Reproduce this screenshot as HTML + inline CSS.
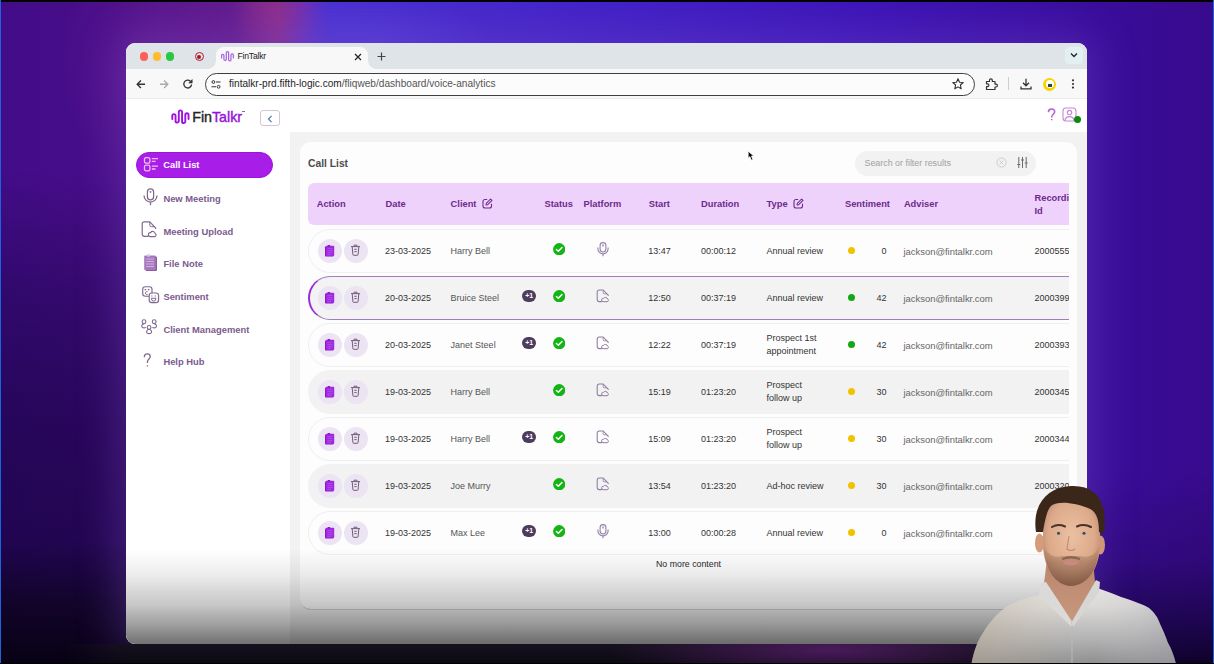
<!DOCTYPE html>
<html><head><meta charset="utf-8">
<style>
*{box-sizing:border-box;margin:0;padding:0}
html,body{width:1214px;height:664px;overflow:hidden}
body{position:relative;font-family:"Liberation Sans",sans-serif;background:#3c0a88}
.abs{position:absolute}
#bg{position:absolute;left:0;top:0;width:1214px;height:664px;
 background:
  radial-gradient(ellipse 40px 40px at 275px 12px, rgba(150,50,140,.45), rgba(150,50,140,0) 100%),
  radial-gradient(ellipse 120px 40px at 370px 38px, rgba(90,70,220,.4), rgba(90,70,220,0) 100%),
  radial-gradient(ellipse 90px 120px at 150px 60px, rgba(120,40,150,.35), rgba(120,40,150,0) 100%),
  linear-gradient(90deg,#420c88 0px,#4a0e8a 120px,#621c8e 230px,#862c8e 278px,#6a30b8 305px,#4a30d0 330px,#4222c6 600px,#3d14b6 880px,#3a0ea0 1060px,#380a8c 1214px);
}
#shadeL{position:absolute;left:0;top:0;width:160px;height:664px;
 background:linear-gradient(180deg,rgba(10,0,45,0) 0px,rgba(10,0,45,0) 170px,rgba(10,0,45,.3) 290px,rgba(10,0,45,.5) 420px,rgba(10,0,45,.6) 540px,rgba(6,2,20,.8) 600px,rgba(4,1,14,.95) 664px);}
#shadeR{position:absolute;left:1060px;top:0;width:154px;height:664px;
 background:linear-gradient(180deg,rgba(8,0,25,0) 0px,rgba(8,0,25,0) 470px,rgba(8,0,25,.18) 560px,rgba(5,0,20,.5) 620px,rgba(5,0,20,.7) 650px,rgba(3,0,12,.8) 664px);}
#win{position:absolute;left:126px;top:43px;width:961px;height:601px;border-radius:9px;overflow:hidden;background:#fff;box-shadow:0 0 40px 10px rgba(125,80,200,.33)}
#tabbar{position:absolute;left:0;top:0;width:961px;height:26px;background:#dfe4e8}
#toolbar{position:absolute;left:0;top:26px;width:961px;height:30px;background:#f8f8f8;border-bottom:1px solid #ececec}
#page{position:absolute;left:0;top:56px;width:961px;height:545px;background:#fff}
#overlay{position:absolute;left:126px;top:43px;width:961px;height:601px;border-radius:9px;
 background:linear-gradient(180deg,rgba(0,0,0,0) 0px,rgba(0,0,0,0) 506px,rgba(0,0,0,.07) 531px,rgba(0,0,0,.15) 547px,rgba(0,0,0,.22) 562px,rgba(0,0,0,.3) 572px,rgba(0,0,0,.36) 580px,rgba(0,0,0,.52) 597px,rgba(0,0,0,.55) 601px);}
#bottom{position:absolute;left:60px;top:644px;width:1080px;height:20px;background:radial-gradient(ellipse 220px 30px at 770px 6px,rgba(90,30,110,.75),rgba(90,30,110,0)),linear-gradient(180deg,#16111e,#0b0912);-webkit-mask-image:linear-gradient(90deg,transparent 0px,#000 70px,#000 1040px,transparent 1080px)}
.t{position:absolute;white-space:nowrap}
</style></head>
<body>
<div id="bg"></div>
<div id="shadeL"></div>
<div id="shadeR"></div>
<div class="abs" style="left:0;top:0;width:1214px;height:2px;background:#000"></div>
<div class="abs" style="left:0;top:0;width:1px;height:664px;background:#1a64e0"></div>
<div class="abs" style="left:1213px;top:0;width:1px;height:664px;background:#1a64e0"></div>

<div id="win">
 <div id="tabbar"></div>
 <div id="toolbar"></div>
 <div id="page"></div>
 <div id="A" style="position:absolute;left:-126px;top:-43px;width:1214px;height:664px">
  <!-- traffic lights -->
  <div class="abs" style="left:139.6px;top:52.4px;width:8.5px;height:8.5px;border-radius:50%;background:#fe5f57"></div>
  <div class="abs" style="left:152.6px;top:52.4px;width:8.5px;height:8.5px;border-radius:50%;background:#febc2e"></div>
  <div class="abs" style="left:165.7px;top:52.4px;width:8.5px;height:8.5px;border-radius:50%;background:#28c840"></div>
  <!-- record -->
  <div class="abs" style="left:194.5px;top:51.8px;width:9.5px;height:9.5px;border-radius:50%;border:1.3px solid #b01830"></div>
  <div class="abs" style="left:197.3px;top:54.6px;width:4px;height:4px;border-radius:50%;background:#b01020"></div>
  <!-- tab -->
  <div class="abs" style="left:216px;top:47px;width:152px;height:22px;background:#f8f8f8;border-radius:8px 8px 0 0"></div>
  <div class="abs" style="left:208px;top:61px;width:8px;height:8px;background:radial-gradient(circle at 0 0,#dfe4e8 7.5px,#f8f8f8 8px)"></div>
  <div class="abs" style="left:368px;top:61px;width:8px;height:8px;background:radial-gradient(circle at 100% 0,#dfe4e8 7.5px,#f8f8f8 8px)"></div>
  <svg class="abs" style="left:220.5px;top:50px" width="13" height="13" viewBox="3.5 3 18 16"><path d="M4.3 13 V9.7 A1.62 1.62 0 0 1 7.55 9.7 V14.9 A1.62 1.62 0 0 0 10.8 14.9 V6 A1.62 1.62 0 0 1 14.05 6 V15.4 A1.62 1.62 0 0 0 17.3 15.4 V8.9 A1.62 1.62 0 0 1 20.55 8.9 V13" fill="none" stroke="#a564e0" stroke-width="1.7" stroke-linecap="round"/></svg>
  <div class="t" style="left:237.5px;top:51px;font-size:8.6px;letter-spacing:-0.2px;color:#222">FinTalkr</div>
  <svg class="abs" style="left:353.5px;top:52.5px" width="8" height="8" viewBox="0 0 8 8"><path d="M1 1L7 7M7 1L1 7" stroke="#222" stroke-width="1.2"/></svg>
  <svg class="abs" style="left:376.5px;top:51.5px" width="9" height="9" viewBox="0 0 9 9"><path d="M4.5 0.5V8.5M0.5 4.5H8.5" stroke="#444" stroke-width="1.2"/></svg>
  <div class="abs" style="left:1065px;top:47px;width:18px;height:17px;border-radius:4px;background:#e3f0f1"></div>
  <svg class="abs" style="left:1070px;top:52px" width="8" height="6" viewBox="0 0 8 6"><path d="M1 1.5L4 4.5L7 1.5" fill="none" stroke="#222" stroke-width="1.3"/></svg>
  <!-- toolbar -->
  <svg class="abs" style="left:0;top:0" width="300" height="120"><g fill="none" stroke-width="1.35"><path d="M145 84.2H137.3M140.9 80.5L137.2 84.2L140.9 87.9" stroke="#333"/><path d="M160 84.2H167.7M164.1 80.5L167.8 84.2L164.1 87.9" stroke="#aaa"/><path d="M191.6 84.5A3.9 3.9 0 1 1 190.4 81.2" stroke="#333"/></g><path d="M192.2 79.6V83H188.8Z" fill="#333" stroke="#333" stroke-width="0.6"/></svg>
  <div class="abs" style="left:204.5px;top:72.5px;width:770px;height:23px;border-radius:12px;border:1.6px solid #3f3f3f;background:#fcfcfc"></div>
  <svg class="abs" style="left:211px;top:79.5px" width="10" height="9" viewBox="0 0 10 9"><circle cx="2.4" cy="2" r="1.4" fill="none" stroke="#333" stroke-width="1"/><path d="M5 2H9.5M0.5 6.8H5" stroke="#333" stroke-width="1.1"/><circle cx="7.6" cy="6.8" r="1.4" fill="none" stroke="#333" stroke-width="1"/></svg>
  <div class="t" style="left:229px;top:78px;font-size:10.1px;color:#1f1f1f">fintalkr-prd.fifth-logic.com<span style="color:#555">/fliqweb/dashboard/voice-analytics</span></div>
  <svg class="abs" style="left:952px;top:78px" width="12" height="12" viewBox="0 0 12 12"><path d="M6 0.8L7.5 4.2L11.2 4.5L8.4 7L9.2 10.8L6 8.9L2.8 10.8L3.6 7L0.8 4.5L4.5 4.2Z" fill="none" stroke="#333" stroke-width="1.1" stroke-linejoin="round"/></svg>
  <svg class="abs" style="left:985px;top:77.5px" width="13" height="13" viewBox="0 0 13 13"><path d="M1.5 3.5H4.5V2.2A1.4 1.4 0 0 1 7.3 2.2V3.5H10V6.2H11A1.4 1.4 0 0 1 11 9H10V11.5H1.5V8.6H2.5A1.4 1.4 0 0 0 2.5 5.8H1.5Z" fill="none" stroke="#333" stroke-width="1.2" stroke-linejoin="round"/></svg>
  <div class="abs" style="left:1008px;top:77px;width:1px;height:13px;background:#c8d0d0"></div>
  <svg class="abs" style="left:1020px;top:77.5px" width="12" height="12" viewBox="0 0 12 12"><path d="M6 0.8V7.5M3 4.8L6 7.8L9 4.8M1 8.5V10.8H11V8.5" fill="none" stroke="#333" stroke-width="1.3"/></svg>
  <div class="abs" style="left:1043px;top:77.5px;width:13px;height:13px;border-radius:50%;background:#f5d400"></div>
  <div class="abs" style="left:1045.5px;top:80px;width:8px;height:8px;border-radius:50%;background:#fff"></div>
  <div class="abs" style="left:1047.5px;top:84px;width:4px;height:3px;background:#2a4a40"></div>
  <svg class="abs" style="left:1070px;top:77px" width="6" height="14" viewBox="0 0 6 14"><circle cx="3" cy="3.3" r="1.1" fill="#333"/><circle cx="3" cy="7" r="1.1" fill="#333"/><circle cx="3" cy="10.6" r="1.1" fill="#333"/></svg>
  <!--PAGE-->
<svg class="abs" style="left:168px;top:106px" width="24" height="20" viewBox="0 0 24 20"><path d="M4.3 13 V9.7 A1.62 1.62 0 0 1 7.55 9.7 V14.9 A1.62 1.62 0 0 0 10.8 14.9 V6 A1.62 1.62 0 0 1 14.05 6 V15.4 A1.62 1.62 0 0 0 17.3 15.4 V8.9 A1.62 1.62 0 0 1 20.55 8.9 V13" fill="none" stroke="#a012e0" stroke-width="1.9" stroke-linecap="round"/></svg>
<div class="t" style="left:192.3px;top:108.9px;font-size:14.3px;font-weight:400;letter-spacing:-0.05px;-webkit-text-stroke:0.4px #262626;color:#262626">Fin<span style="color:#9612d8;-webkit-text-stroke:0.4px #9612d8">Talkr</span></div>
<div class="abs" style="left:241.5px;top:111px;width:3px;height:1px;background:#777"></div>
<div class="abs" style="left:260px;top:109.5px;width:20px;height:16.5px;border:1px solid #d8c2d8;border-radius:3px;background:#fff"></div>
<svg class="abs" style="left:267px;top:114.5px" width="6" height="8" viewBox="0 0 6 8"><path d="M4.5 0.8L1.5 4L4.5 7.2" fill="none" stroke="#4a78a8" stroke-width="1.2"/></svg>
<svg class="abs" style="left:0;top:0" width="1214" height="200"><path d="M1048.4 112.2C1048.4 109.8 1050 108.9 1051.5 108.9C1053.2 108.9 1054.7 110 1054.7 111.8C1054.7 114 1051.7 114.6 1051.7 117.2V117.4M1051.7 119V120.3" fill="none" stroke="#b262d2" stroke-width="1.5"/></svg>
<svg class="abs" style="left:1062px;top:107px" width="15" height="15" viewBox="0 0 15 15"><rect x="1" y="1" width="13" height="13" rx="3" fill="none" stroke="#c488dc" stroke-width="1.1"/><circle cx="7.5" cy="5.6" r="2.2" fill="none" stroke="#c488dc" stroke-width="1.1"/><path d="M2.8 13.6C3.5 10.5 5.5 9.6 7.5 9.6S11.5 10.5 12.2 13.6" fill="none" stroke="#c488dc" stroke-width="1.1"/></svg>
<div class="abs" style="left:1073.5px;top:115.5px;width:7.5px;height:7.5px;border-radius:50%;background:#0c8a0c"></div>
<div class="abs" style="left:290px;top:132px;width:797px;height:512px;background:#f2f2f2"></div>
<div class="abs" style="left:136px;top:152.3px;width:137px;height:25.5px;border-radius:13px;background:#a81ee8;border:1px solid #9a14da"></div>
<svg class="abs" style="left:143px;top:156px" width="17" height="16" viewBox="0 0 17 16"><rect x="1.5" y="1.6" width="5.4" height="5.6" rx="1.6" fill="none" stroke="#f0bdf2" stroke-width="1.3"/><rect x="1.5" y="9.2" width="5.4" height="5.6" rx="1.6" fill="none" stroke="#f0bdf2" stroke-width="1.3"/><path d="M8.8 2.6H15M8.8 5.4H12.6M8.8 10.2H15M8.8 13H12.6" stroke="#f0bdf2" stroke-width="1.3"/></svg>
<div class="t" style="left:163.3px;top:159.8px;font-size:9.3px;font-weight:700;color:#fff">Call List</div>
<div class="t" style="left:163.4px;top:193.0px;font-size:9.4px;font-weight:700;color:#7b5b8e">New Meeting</div>
<div class="t" style="left:163.4px;top:225.5px;font-size:9.4px;font-weight:700;color:#7b5b8e">Meeting Upload</div>
<div class="t" style="left:163.4px;top:258.0px;font-size:9.4px;font-weight:700;color:#7b5b8e">File Note</div>
<div class="t" style="left:163.4px;top:291.0px;font-size:9.4px;font-weight:700;color:#7b5b8e">Sentiment</div>
<div class="t" style="left:163.4px;top:323.5px;font-size:9.4px;font-weight:700;color:#7b5b8e">Client Management</div>
<div class="t" style="left:163.4px;top:356.0px;font-size:9.4px;font-weight:700;color:#7b5b8e">Help Hub</div>
<svg class="abs" style="left:143px;top:187.5px" width="15" height="18" viewBox="0 0 15 18"><rect x="4.4" y="0.9" width="6.2" height="11" rx="3.1" fill="none" stroke="#7f6a8e" stroke-width="1.25"/><path d="M6.8 3.6L7.5 5L8.2 3.6Z" fill="#7f6a8e" stroke="#7f6a8e" stroke-width="0.6"/><path d="M1 7.5A6.5 6.5 0 0 0 14 7.5M7.5 14.2V17.2" fill="none" stroke="#7f6a8e" stroke-width="1.25"/></svg>
<svg class="abs" style="left:141px;top:221px" width="17" height="17" viewBox="0 0 17 17"><path d="M7.6 15.4H3.4A2.2 2.2 0 0 1 1.2 13.2V3A2.2 2.2 0 0 1 3.4 0.8H8.8L14.6 6.8V8" fill="none" stroke="#7f6a8e" stroke-width="1.2" stroke-linejoin="round"/><path d="M8.8 1.2V4.2A1.5 1.5 0 0 0 10.3 5.7H13.8" fill="none" stroke="#7f6a8e" stroke-width="1"/><path d="M9.2 15.6H13.8A1.6 1.6 0 0 0 14.2 12.6A2.5 2.5 0 0 0 9.6 11.6A2 2 0 0 0 9.2 15.6Z" fill="none" stroke="#7f6a8e" stroke-width="1.15"/></svg>
<svg class="abs" style="left:143px;top:253.5px" width="15" height="18" viewBox="0 0 15 18"><rect x="2.5" y="2.5" width="11.5" height="14.5" rx="1" fill="#8a5ea0"/><rect x="1.2" y="1.5" width="11.5" height="14.5" rx="1" fill="#a878be"/><path d="M3 5H11M3 7.5H11M3 10H11M3 12.5H11" stroke="#d8bfe5" stroke-width="0.8"/><rect x="4" y="0.3" width="3" height="2.5" rx="1" fill="#d8c8e0"/></svg>
<svg class="abs" style="left:0;top:0" width="300" height="400"><g fill="none" stroke="#7f6a8e" stroke-width="1.15"><rect x="142.7" y="286.7" width="9.3" height="9.5" rx="2.6"/><path d="M144.6 289.6H146.2M147.9 289.6H149.5" stroke-width="1.1"/><path d="M147.6 291.8A1.5 1.5 0 1 0 147.6 294.4" stroke-width="1"/><rect x="149.2" y="293" width="9.4" height="9.6" rx="2.6" fill="#fdfdfd"/><path d="M151.9 295.4V296.6M155.3 295.4V296.6" stroke-width="1"/><path d="M151.3 298.3H156Q155.8 301.2 153.65 301.2Q151.5 301.2 151.3 298.3Z" stroke-width="1"/></g></svg>
<svg class="abs" style="left:0;top:0" width="300" height="400"><g fill="none" stroke="#7f6a8e" stroke-width="1.1"><circle cx="144" cy="321.7" r="1.9"/><path d="M144 323.6C141.8 324.2 141.2 326.2 142.3 327.3C143 328 145 328 145.8 327.3"/><circle cx="154.2" cy="321.7" r="1.9"/><path d="M154.2 323.6C156.4 324.2 157 326.2 155.9 327.3C155.2 328 153.2 328 152.4 327.3"/><circle cx="149.1" cy="327.4" r="1.9"/><path d="M149.1 329.3C146.6 329.8 146 332.2 147.2 333.1C148 333.8 150.2 333.8 151 333.1C152.2 332.2 151.6 329.8 149.1 329.3"/></g><path d="M144.3 357.3C144.3 354.9 145.8 353.9 147.3 353.9C148.9 353.9 150.2 355 150.2 356.7C150.2 358.8 147.4 359.2 147.4 361.9V362.9M147.4 365.2V366.6" fill="none" stroke="#7f6a8e" stroke-width="1.3"/></svg>
<div class="abs" style="left:300px;top:142px;width:777px;height:468px;background:#fdfdfd;border-radius:11px;border-bottom:1px solid #d2d2d2"></div>
<div class="t" style="left:308px;top:158.4px;font-size:10.3px;font-weight:700;color:#4c4c4c">Call List</div>
<div class="abs" style="left:854.5px;top:150.5px;width:181px;height:25px;border-radius:13px;background:#f2f2f2"></div>
<div class="t" style="left:864.5px;top:157.5px;font-size:8.9px;color:#a0a0a0">Search or filter results</div>
<svg class="abs" style="left:995.5px;top:156.5px" width="11" height="11" viewBox="0 0 11 11"><circle cx="5.5" cy="5.5" r="4.6" fill="none" stroke="#c8c8c8" stroke-width="0.9"/><path d="M3.6 3.6L7.4 7.4M7.4 3.6L3.6 7.4" stroke="#c8c8c8" stroke-width="0.9"/></svg>
<svg class="abs" style="left:1016.5px;top:155.5px" width="11" height="13" viewBox="0 0 11 13"><path d="M1.8 1V12M5.5 1V12M9.2 1V12" stroke="#6a6a6a" stroke-width="1"/><path d="M0.3 8.5H3.3M4 4H7M7.7 7H10.7" stroke="#6a6a6a" stroke-width="1.2"/></svg>
<div class="abs" style="left:308px;top:183px;width:761px;height:380px;overflow:hidden">
<div class="abs" style="left:0;top:0.4px;width:800px;height:41.8px;background:#efd2fb;border-radius:6px"></div>
<div class="t" style="left:8.699999999999989px;top:16px;font-size:9.3px;font-weight:700;color:#6b2a8c;">Action</div>
<div class="t" style="left:77.60000000000002px;top:16px;font-size:9.3px;font-weight:700;color:#6b2a8c;">Date</div>
<div class="t" style="left:142.60000000000002px;top:16px;font-size:9.3px;font-weight:700;color:#6b2a8c;">Client</div>
<div class="t" style="left:236.5px;top:16px;font-size:9.3px;font-weight:700;color:#6b2a8c;">Status</div>
<div class="t" style="left:275.5px;top:16px;font-size:9.3px;font-weight:700;color:#6b2a8c;">Platform</div>
<div class="t" style="left:340.70000000000005px;top:16px;font-size:9.3px;font-weight:700;color:#6b2a8c;">Start</div>
<div class="t" style="left:393px;top:16px;font-size:9.3px;font-weight:700;color:#6b2a8c;">Duration</div>
<div class="t" style="left:458.6px;top:16px;font-size:9.3px;font-weight:700;color:#6b2a8c;">Type</div>
<div class="t" style="left:537px;top:16px;font-size:9.3px;font-weight:700;color:#6b2a8c;">Sentiment</div>
<div class="t" style="left:595.9px;top:16px;font-size:9.3px;font-weight:700;color:#6b2a8c;">Adviser</div>
<div class="t" style="left:726.5px;top:9.400000000000006px;font-size:9.3px;font-weight:700;color:#6b2a8c;line-height:12.4px">Recording<br>Id</div>
<svg class="abs" style="left:173.5px;top:15px" width="11" height="11" viewBox="0 0 11 11"><path d="M9.5 5.8V8A2 2 0 0 1 7.5 10H3A2 2 0 0 1 1 8V3.5A2 2 0 0 1 3 1.5H5.2" fill="none" stroke="#6a2a8a" stroke-width="1.1"/><path d="M4 7L4.3 5.3L8.6 1L10 2.4L5.7 6.7Z" fill="none" stroke="#6a2a8a" stroke-width="1.05" stroke-linejoin="round"/></svg>
<svg class="abs" style="left:484.5px;top:15px" width="11" height="11" viewBox="0 0 11 11"><path d="M9.5 5.8V8A2 2 0 0 1 7.5 10H3A2 2 0 0 1 1 8V3.5A2 2 0 0 1 3 1.5H5.2" fill="none" stroke="#6a2a8a" stroke-width="1.1"/><path d="M4 7L4.3 5.3L8.6 1L10 2.4L5.7 6.7Z" fill="none" stroke="#6a2a8a" stroke-width="1.05" stroke-linejoin="round"/></svg>
<div class="abs" style="left:0;top:45.80000000000001px;width:800px;height:44px;background:#fdfdfd;border:1px solid #efefef;border-radius:22px 0 0 22px"></div>
<div class="abs" style="left:9.600000000000023px;top:55.80000000000001px;width:24px;height:24px;border-radius:50%;background:#ece3f3"></div>
<div class="abs" style="left:35.69999999999999px;top:55.80000000000001px;width:24px;height:24px;border-radius:50%;background:#ece3f3"></div>
<svg class="abs" style="left:16.30000000000001px;top:61.80000000000001px" width="11" height="12" viewBox="0 0 11 12"><rect x="1" y="1.4" width="8.6" height="10" rx="0.9" fill="#8a14c8"/><rect x="1.8" y="0.8" width="8.4" height="10.2" rx="0.9" fill="#a028e0"/><path d="M3.4 3.6H8.6M3.4 5.6H8.6M3.4 7.6H8.6M3.4 9.3H7" stroke="#b658ea" stroke-width="0.7"/><rect x="3.6" y="0" width="2.6" height="1.4" rx="0.6" fill="#8a14c8"/></svg>
<svg class="abs" style="left:42px;top:60.900000000000006px" width="11" height="12" viewBox="0 0 11 12"><path d="M1 2.6H10M4 2.4V1.2H7V2.4M2.2 2.8L2.9 10.6A0.8 0.8 0 0 0 3.7 11.3H7.3A0.8 0.8 0 0 0 8.1 10.6L8.8 2.8M4.3 5.3H6.7M4.3 7.6H6.7" fill="none" stroke="#6e607a" stroke-width="1"/></svg>
<div class="t" style="left:77px;top:62.80000000000001px;font-size:9px;font-weight:400;color:#333;">23-03-2025</div>
<div class="t" style="left:142.60000000000002px;top:62.80000000000001px;font-size:9px;font-weight:400;color:#555;">Harry Bell</div>
<svg class="abs" style="left:244.89999999999998px;top:59.80000000000001px" width="12.4" height="12.4" viewBox="0 0 13 13"><circle cx="6.5" cy="6.5" r="6.4" fill="#14b414"/><path d="M3.6 6.8L5.6 8.7L9.4 4.7" fill="none" stroke="#fff" stroke-width="1.6" stroke-linecap="round" stroke-linejoin="round"/></svg>
<svg class="abs" style="left:288.5px;top:58.80000000000001px" width="12" height="15" viewBox="0 0 12 15"><rect x="3.1" y="0.6" width="5.8" height="9.4" rx="2.9" fill="none" stroke="#9580a8" stroke-width="1.1"/><path d="M5.4 2.8L6 4.6L6.6 2.8Z" fill="#9580a8" stroke="#9580a8" stroke-width="0.5"/><path d="M0.9 5.4V6.8A5.1 5.1 0 0 0 11.1 6.8V5.4M6 11.9V14.2" fill="none" stroke="#9580a8" stroke-width="1.1"/></svg>
<div class="t" style="left:321.5px;top:62.80000000000001px;width:60px;text-align:center;font-size:9px;color:#333">13:47</div>
<div class="t" style="left:393px;top:62.80000000000001px;font-size:9px;font-weight:400;color:#333;">00:00:12</div>
<div class="t" style="left:458.5px;top:62.80000000000001px;font-size:9px;font-weight:400;color:#333;">Annual review</div>
<div class="abs" style="left:539.5px;top:64.30000000000001px;width:7px;height:7px;border-radius:50%;background:#f2c100"></div>
<div class="t" style="left:538.6px;top:62.80000000000001px;width:40px;text-align:right;font-size:9px;color:#333">0</div>
<div class="t" style="left:595.4px;top:62.80000000000001px;font-size:9.45px;font-weight:400;color:#666;">jackson@fintalkr.com</div>
<div class="t" style="left:726.5px;top:62.80000000000001px;font-size:9px;font-weight:400;color:#333;">2000555</div>
<div class="abs" style="left:0;top:92.80000000000001px;width:800px;height:44px;background:#f3f3f3;border:1.5px solid #a57bc0;border-left:2.5px solid #9a2ad6;border-radius:22px 0 0 22px"></div>
<div class="abs" style="left:9.600000000000023px;top:102.80000000000001px;width:24px;height:24px;border-radius:50%;background:#ece3f3"></div>
<div class="abs" style="left:35.69999999999999px;top:102.80000000000001px;width:24px;height:24px;border-radius:50%;background:#ece3f3"></div>
<svg class="abs" style="left:16.30000000000001px;top:108.80000000000001px" width="11" height="12" viewBox="0 0 11 12"><rect x="1" y="1.4" width="8.6" height="10" rx="0.9" fill="#8a14c8"/><rect x="1.8" y="0.8" width="8.4" height="10.2" rx="0.9" fill="#a028e0"/><path d="M3.4 3.6H8.6M3.4 5.6H8.6M3.4 7.6H8.6M3.4 9.3H7" stroke="#b658ea" stroke-width="0.7"/><rect x="3.6" y="0" width="2.6" height="1.4" rx="0.6" fill="#8a14c8"/></svg>
<svg class="abs" style="left:42px;top:107.90000000000003px" width="11" height="12" viewBox="0 0 11 12"><path d="M1 2.6H10M4 2.4V1.2H7V2.4M2.2 2.8L2.9 10.6A0.8 0.8 0 0 0 3.7 11.3H7.3A0.8 0.8 0 0 0 8.1 10.6L8.8 2.8M4.3 5.3H6.7M4.3 7.6H6.7" fill="none" stroke="#6e607a" stroke-width="1"/></svg>
<div class="t" style="left:77px;top:109.80000000000001px;font-size:9px;font-weight:400;color:#333;">20-03-2025</div>
<div class="t" style="left:142.60000000000002px;top:109.80000000000001px;font-size:9px;font-weight:400;color:#555;">Bruice Steel</div>
<div class="abs" style="left:213.9000000000001px;top:106.69999999999999px;width:14.6px;height:12.6px;border-radius:6.3px;background:#4e3b5e;color:#fff;font-size:7px;font-weight:700;text-align:center;line-height:12.6px">+1</div>
<svg class="abs" style="left:244.89999999999998px;top:106.80000000000001px" width="12.4" height="12.4" viewBox="0 0 13 13"><circle cx="6.5" cy="6.5" r="6.4" fill="#14b414"/><path d="M3.6 6.8L5.6 8.7L9.4 4.7" fill="none" stroke="#fff" stroke-width="1.6" stroke-linecap="round" stroke-linejoin="round"/></svg>
<svg class="abs" style="left:288px;top:106.0px" width="14" height="14" viewBox="0 0 14 14"><path d="M5.8 12.6H3.2A2 2 0 0 1 1.2 10.6V3A2 2 0 0 1 3.2 1H7.2L12.2 6.2V7" fill="none" stroke="#8f7aa2" stroke-width="1.05" stroke-linejoin="round"/><path d="M7.2 1.3V3.6A1.2 1.2 0 0 0 8.4 4.8H11" fill="none" stroke="#8f7aa2" stroke-width="0.85"/><path d="M7 12.7H11.2A1.4 1.4 0 0 0 11.5 10A2.2 2.2 0 0 0 7.6 9.3A1.7 1.7 0 0 0 7 12.7Z" fill="none" stroke="#8f7aa2" stroke-width="1"/></svg>
<div class="t" style="left:321.5px;top:109.80000000000001px;width:60px;text-align:center;font-size:9px;color:#333">12:50</div>
<div class="t" style="left:393px;top:109.80000000000001px;font-size:9px;font-weight:400;color:#333;">00:37:19</div>
<div class="t" style="left:458.5px;top:109.80000000000001px;font-size:9px;font-weight:400;color:#333;">Annual review</div>
<div class="abs" style="left:539.5px;top:111.30000000000001px;width:7px;height:7px;border-radius:50%;background:#13a813"></div>
<div class="t" style="left:538.6px;top:109.80000000000001px;width:40px;text-align:right;font-size:9px;color:#333">42</div>
<div class="t" style="left:595.4px;top:109.80000000000001px;font-size:9.45px;font-weight:400;color:#666;">jackson@fintalkr.com</div>
<div class="t" style="left:726.5px;top:109.80000000000001px;font-size:9px;font-weight:400;color:#333;">2000399</div>
<div class="abs" style="left:0;top:139.8px;width:800px;height:44px;background:#fdfdfd;border:1px solid #efefef;border-radius:22px 0 0 22px"></div>
<div class="abs" style="left:9.600000000000023px;top:149.8px;width:24px;height:24px;border-radius:50%;background:#ece3f3"></div>
<div class="abs" style="left:35.69999999999999px;top:149.8px;width:24px;height:24px;border-radius:50%;background:#ece3f3"></div>
<svg class="abs" style="left:16.30000000000001px;top:155.8px" width="11" height="12" viewBox="0 0 11 12"><rect x="1" y="1.4" width="8.6" height="10" rx="0.9" fill="#8a14c8"/><rect x="1.8" y="0.8" width="8.4" height="10.2" rx="0.9" fill="#a028e0"/><path d="M3.4 3.6H8.6M3.4 5.6H8.6M3.4 7.6H8.6M3.4 9.3H7" stroke="#b658ea" stroke-width="0.7"/><rect x="3.6" y="0" width="2.6" height="1.4" rx="0.6" fill="#8a14c8"/></svg>
<svg class="abs" style="left:42px;top:154.90000000000003px" width="11" height="12" viewBox="0 0 11 12"><path d="M1 2.6H10M4 2.4V1.2H7V2.4M2.2 2.8L2.9 10.6A0.8 0.8 0 0 0 3.7 11.3H7.3A0.8 0.8 0 0 0 8.1 10.6L8.8 2.8M4.3 5.3H6.7M4.3 7.6H6.7" fill="none" stroke="#6e607a" stroke-width="1"/></svg>
<div class="t" style="left:77px;top:156.8px;font-size:9px;font-weight:400;color:#333;">20-03-2025</div>
<div class="t" style="left:142.60000000000002px;top:156.8px;font-size:9px;font-weight:400;color:#555;">Janet Steel</div>
<div class="abs" style="left:213.9000000000001px;top:153.7px;width:14.6px;height:12.6px;border-radius:6.3px;background:#4e3b5e;color:#fff;font-size:7px;font-weight:700;text-align:center;line-height:12.6px">+1</div>
<svg class="abs" style="left:244.89999999999998px;top:153.8px" width="12.4" height="12.4" viewBox="0 0 13 13"><circle cx="6.5" cy="6.5" r="6.4" fill="#14b414"/><path d="M3.6 6.8L5.6 8.7L9.4 4.7" fill="none" stroke="#fff" stroke-width="1.6" stroke-linecap="round" stroke-linejoin="round"/></svg>
<svg class="abs" style="left:288px;top:153.0px" width="14" height="14" viewBox="0 0 14 14"><path d="M5.8 12.6H3.2A2 2 0 0 1 1.2 10.6V3A2 2 0 0 1 3.2 1H7.2L12.2 6.2V7" fill="none" stroke="#8f7aa2" stroke-width="1.05" stroke-linejoin="round"/><path d="M7.2 1.3V3.6A1.2 1.2 0 0 0 8.4 4.8H11" fill="none" stroke="#8f7aa2" stroke-width="0.85"/><path d="M7 12.7H11.2A1.4 1.4 0 0 0 11.5 10A2.2 2.2 0 0 0 7.6 9.3A1.7 1.7 0 0 0 7 12.7Z" fill="none" stroke="#8f7aa2" stroke-width="1"/></svg>
<div class="t" style="left:321.5px;top:156.8px;width:60px;text-align:center;font-size:9px;color:#333">12:22</div>
<div class="t" style="left:393px;top:156.8px;font-size:9px;font-weight:400;color:#333;">00:37:19</div>
<div class="t" style="left:458.5px;top:149.3px;font-size:9px;font-weight:400;color:#333;line-height:12.8px">Prospect 1st<br>appointment</div>
<div class="abs" style="left:539.5px;top:158.3px;width:7px;height:7px;border-radius:50%;background:#13a813"></div>
<div class="t" style="left:538.6px;top:156.8px;width:40px;text-align:right;font-size:9px;color:#333">42</div>
<div class="t" style="left:595.4px;top:156.8px;font-size:9.45px;font-weight:400;color:#666;">jackson@fintalkr.com</div>
<div class="t" style="left:726.5px;top:156.8px;font-size:9px;font-weight:400;color:#333;">2000393</div>
<div class="abs" style="left:0;top:186.8px;width:800px;height:44px;background:#f2f2f2;border-radius:22px 0 0 22px"></div>
<div class="abs" style="left:9.600000000000023px;top:196.8px;width:24px;height:24px;border-radius:50%;background:#ece3f3"></div>
<div class="abs" style="left:35.69999999999999px;top:196.8px;width:24px;height:24px;border-radius:50%;background:#ece3f3"></div>
<svg class="abs" style="left:16.30000000000001px;top:202.8px" width="11" height="12" viewBox="0 0 11 12"><rect x="1" y="1.4" width="8.6" height="10" rx="0.9" fill="#8a14c8"/><rect x="1.8" y="0.8" width="8.4" height="10.2" rx="0.9" fill="#a028e0"/><path d="M3.4 3.6H8.6M3.4 5.6H8.6M3.4 7.6H8.6M3.4 9.3H7" stroke="#b658ea" stroke-width="0.7"/><rect x="3.6" y="0" width="2.6" height="1.4" rx="0.6" fill="#8a14c8"/></svg>
<svg class="abs" style="left:42px;top:201.90000000000003px" width="11" height="12" viewBox="0 0 11 12"><path d="M1 2.6H10M4 2.4V1.2H7V2.4M2.2 2.8L2.9 10.6A0.8 0.8 0 0 0 3.7 11.3H7.3A0.8 0.8 0 0 0 8.1 10.6L8.8 2.8M4.3 5.3H6.7M4.3 7.6H6.7" fill="none" stroke="#6e607a" stroke-width="1"/></svg>
<div class="t" style="left:77px;top:203.8px;font-size:9px;font-weight:400;color:#333;">19-03-2025</div>
<div class="t" style="left:142.60000000000002px;top:203.8px;font-size:9px;font-weight:400;color:#555;">Harry Bell</div>
<svg class="abs" style="left:244.89999999999998px;top:200.8px" width="12.4" height="12.4" viewBox="0 0 13 13"><circle cx="6.5" cy="6.5" r="6.4" fill="#14b414"/><path d="M3.6 6.8L5.6 8.7L9.4 4.7" fill="none" stroke="#fff" stroke-width="1.6" stroke-linecap="round" stroke-linejoin="round"/></svg>
<svg class="abs" style="left:288px;top:200.0px" width="14" height="14" viewBox="0 0 14 14"><path d="M5.8 12.6H3.2A2 2 0 0 1 1.2 10.6V3A2 2 0 0 1 3.2 1H7.2L12.2 6.2V7" fill="none" stroke="#8f7aa2" stroke-width="1.05" stroke-linejoin="round"/><path d="M7.2 1.3V3.6A1.2 1.2 0 0 0 8.4 4.8H11" fill="none" stroke="#8f7aa2" stroke-width="0.85"/><path d="M7 12.7H11.2A1.4 1.4 0 0 0 11.5 10A2.2 2.2 0 0 0 7.6 9.3A1.7 1.7 0 0 0 7 12.7Z" fill="none" stroke="#8f7aa2" stroke-width="1"/></svg>
<div class="t" style="left:321.5px;top:203.8px;width:60px;text-align:center;font-size:9px;color:#333">15:19</div>
<div class="t" style="left:393px;top:203.8px;font-size:9px;font-weight:400;color:#333;">01:23:20</div>
<div class="t" style="left:458.5px;top:196.3px;font-size:9px;font-weight:400;color:#333;line-height:12.8px">Prospect<br>follow up</div>
<div class="abs" style="left:539.5px;top:205.3px;width:7px;height:7px;border-radius:50%;background:#f2c100"></div>
<div class="t" style="left:538.6px;top:203.8px;width:40px;text-align:right;font-size:9px;color:#333">30</div>
<div class="t" style="left:595.4px;top:203.8px;font-size:9.45px;font-weight:400;color:#666;">jackson@fintalkr.com</div>
<div class="t" style="left:726.5px;top:203.8px;font-size:9px;font-weight:400;color:#333;">2000345</div>
<div class="abs" style="left:0;top:233.8px;width:800px;height:44px;background:#fdfdfd;border:1px solid #efefef;border-radius:22px 0 0 22px"></div>
<div class="abs" style="left:9.600000000000023px;top:243.8px;width:24px;height:24px;border-radius:50%;background:#ece3f3"></div>
<div class="abs" style="left:35.69999999999999px;top:243.8px;width:24px;height:24px;border-radius:50%;background:#ece3f3"></div>
<svg class="abs" style="left:16.30000000000001px;top:249.8px" width="11" height="12" viewBox="0 0 11 12"><rect x="1" y="1.4" width="8.6" height="10" rx="0.9" fill="#8a14c8"/><rect x="1.8" y="0.8" width="8.4" height="10.2" rx="0.9" fill="#a028e0"/><path d="M3.4 3.6H8.6M3.4 5.6H8.6M3.4 7.6H8.6M3.4 9.3H7" stroke="#b658ea" stroke-width="0.7"/><rect x="3.6" y="0" width="2.6" height="1.4" rx="0.6" fill="#8a14c8"/></svg>
<svg class="abs" style="left:42px;top:248.90000000000003px" width="11" height="12" viewBox="0 0 11 12"><path d="M1 2.6H10M4 2.4V1.2H7V2.4M2.2 2.8L2.9 10.6A0.8 0.8 0 0 0 3.7 11.3H7.3A0.8 0.8 0 0 0 8.1 10.6L8.8 2.8M4.3 5.3H6.7M4.3 7.6H6.7" fill="none" stroke="#6e607a" stroke-width="1"/></svg>
<div class="t" style="left:77px;top:250.8px;font-size:9px;font-weight:400;color:#333;">19-03-2025</div>
<div class="t" style="left:142.60000000000002px;top:250.8px;font-size:9px;font-weight:400;color:#555;">Harry Bell</div>
<div class="abs" style="left:213.9000000000001px;top:247.7px;width:14.6px;height:12.6px;border-radius:6.3px;background:#4e3b5e;color:#fff;font-size:7px;font-weight:700;text-align:center;line-height:12.6px">+1</div>
<svg class="abs" style="left:244.89999999999998px;top:247.8px" width="12.4" height="12.4" viewBox="0 0 13 13"><circle cx="6.5" cy="6.5" r="6.4" fill="#14b414"/><path d="M3.6 6.8L5.6 8.7L9.4 4.7" fill="none" stroke="#fff" stroke-width="1.6" stroke-linecap="round" stroke-linejoin="round"/></svg>
<svg class="abs" style="left:288px;top:247.0px" width="14" height="14" viewBox="0 0 14 14"><path d="M5.8 12.6H3.2A2 2 0 0 1 1.2 10.6V3A2 2 0 0 1 3.2 1H7.2L12.2 6.2V7" fill="none" stroke="#8f7aa2" stroke-width="1.05" stroke-linejoin="round"/><path d="M7.2 1.3V3.6A1.2 1.2 0 0 0 8.4 4.8H11" fill="none" stroke="#8f7aa2" stroke-width="0.85"/><path d="M7 12.7H11.2A1.4 1.4 0 0 0 11.5 10A2.2 2.2 0 0 0 7.6 9.3A1.7 1.7 0 0 0 7 12.7Z" fill="none" stroke="#8f7aa2" stroke-width="1"/></svg>
<div class="t" style="left:321.5px;top:250.8px;width:60px;text-align:center;font-size:9px;color:#333">15:09</div>
<div class="t" style="left:393px;top:250.8px;font-size:9px;font-weight:400;color:#333;">01:23:20</div>
<div class="t" style="left:458.5px;top:243.3px;font-size:9px;font-weight:400;color:#333;line-height:12.8px">Prospect<br>follow up</div>
<div class="abs" style="left:539.5px;top:252.3px;width:7px;height:7px;border-radius:50%;background:#f2c100"></div>
<div class="t" style="left:538.6px;top:250.8px;width:40px;text-align:right;font-size:9px;color:#333">30</div>
<div class="t" style="left:595.4px;top:250.8px;font-size:9.45px;font-weight:400;color:#666;">jackson@fintalkr.com</div>
<div class="t" style="left:726.5px;top:250.8px;font-size:9px;font-weight:400;color:#333;">2000344</div>
<div class="abs" style="left:0;top:280.8px;width:800px;height:44px;background:#f2f2f2;border-radius:22px 0 0 22px"></div>
<div class="abs" style="left:9.600000000000023px;top:290.8px;width:24px;height:24px;border-radius:50%;background:#ece3f3"></div>
<div class="abs" style="left:35.69999999999999px;top:290.8px;width:24px;height:24px;border-radius:50%;background:#ece3f3"></div>
<svg class="abs" style="left:16.30000000000001px;top:296.8px" width="11" height="12" viewBox="0 0 11 12"><rect x="1" y="1.4" width="8.6" height="10" rx="0.9" fill="#8a14c8"/><rect x="1.8" y="0.8" width="8.4" height="10.2" rx="0.9" fill="#a028e0"/><path d="M3.4 3.6H8.6M3.4 5.6H8.6M3.4 7.6H8.6M3.4 9.3H7" stroke="#b658ea" stroke-width="0.7"/><rect x="3.6" y="0" width="2.6" height="1.4" rx="0.6" fill="#8a14c8"/></svg>
<svg class="abs" style="left:42px;top:295.90000000000003px" width="11" height="12" viewBox="0 0 11 12"><path d="M1 2.6H10M4 2.4V1.2H7V2.4M2.2 2.8L2.9 10.6A0.8 0.8 0 0 0 3.7 11.3H7.3A0.8 0.8 0 0 0 8.1 10.6L8.8 2.8M4.3 5.3H6.7M4.3 7.6H6.7" fill="none" stroke="#6e607a" stroke-width="1"/></svg>
<div class="t" style="left:77px;top:297.8px;font-size:9px;font-weight:400;color:#333;">19-03-2025</div>
<div class="t" style="left:142.60000000000002px;top:297.8px;font-size:9px;font-weight:400;color:#555;">Joe Murry</div>
<svg class="abs" style="left:244.89999999999998px;top:294.8px" width="12.4" height="12.4" viewBox="0 0 13 13"><circle cx="6.5" cy="6.5" r="6.4" fill="#14b414"/><path d="M3.6 6.8L5.6 8.7L9.4 4.7" fill="none" stroke="#fff" stroke-width="1.6" stroke-linecap="round" stroke-linejoin="round"/></svg>
<svg class="abs" style="left:288px;top:294.0px" width="14" height="14" viewBox="0 0 14 14"><path d="M5.8 12.6H3.2A2 2 0 0 1 1.2 10.6V3A2 2 0 0 1 3.2 1H7.2L12.2 6.2V7" fill="none" stroke="#8f7aa2" stroke-width="1.05" stroke-linejoin="round"/><path d="M7.2 1.3V3.6A1.2 1.2 0 0 0 8.4 4.8H11" fill="none" stroke="#8f7aa2" stroke-width="0.85"/><path d="M7 12.7H11.2A1.4 1.4 0 0 0 11.5 10A2.2 2.2 0 0 0 7.6 9.3A1.7 1.7 0 0 0 7 12.7Z" fill="none" stroke="#8f7aa2" stroke-width="1"/></svg>
<div class="t" style="left:321.5px;top:297.8px;width:60px;text-align:center;font-size:9px;color:#333">13:54</div>
<div class="t" style="left:393px;top:297.8px;font-size:9px;font-weight:400;color:#333;">01:23:20</div>
<div class="t" style="left:458.5px;top:297.8px;font-size:9px;font-weight:400;color:#333;">Ad-hoc review</div>
<div class="abs" style="left:539.5px;top:299.3px;width:7px;height:7px;border-radius:50%;background:#f2c100"></div>
<div class="t" style="left:538.6px;top:297.8px;width:40px;text-align:right;font-size:9px;color:#333">30</div>
<div class="t" style="left:595.4px;top:297.8px;font-size:9.45px;font-weight:400;color:#666;">jackson@fintalkr.com</div>
<div class="t" style="left:726.5px;top:297.8px;font-size:9px;font-weight:400;color:#333;">2000320</div>
<div class="abs" style="left:0;top:327.79999999999995px;width:800px;height:44px;background:#fdfdfd;border:1px solid #efefef;border-radius:22px 0 0 22px"></div>
<div class="abs" style="left:9.600000000000023px;top:337.79999999999995px;width:24px;height:24px;border-radius:50%;background:#ece3f3"></div>
<div class="abs" style="left:35.69999999999999px;top:337.79999999999995px;width:24px;height:24px;border-radius:50%;background:#ece3f3"></div>
<svg class="abs" style="left:16.30000000000001px;top:343.79999999999995px" width="11" height="12" viewBox="0 0 11 12"><rect x="1" y="1.4" width="8.6" height="10" rx="0.9" fill="#8a14c8"/><rect x="1.8" y="0.8" width="8.4" height="10.2" rx="0.9" fill="#a028e0"/><path d="M3.4 3.6H8.6M3.4 5.6H8.6M3.4 7.6H8.6M3.4 9.3H7" stroke="#b658ea" stroke-width="0.7"/><rect x="3.6" y="0" width="2.6" height="1.4" rx="0.6" fill="#8a14c8"/></svg>
<svg class="abs" style="left:42px;top:342.9px" width="11" height="12" viewBox="0 0 11 12"><path d="M1 2.6H10M4 2.4V1.2H7V2.4M2.2 2.8L2.9 10.6A0.8 0.8 0 0 0 3.7 11.3H7.3A0.8 0.8 0 0 0 8.1 10.6L8.8 2.8M4.3 5.3H6.7M4.3 7.6H6.7" fill="none" stroke="#6e607a" stroke-width="1"/></svg>
<div class="t" style="left:77px;top:344.79999999999995px;font-size:9px;font-weight:400;color:#333;">19-03-2025</div>
<div class="t" style="left:142.60000000000002px;top:344.79999999999995px;font-size:9px;font-weight:400;color:#555;">Max Lee</div>
<div class="abs" style="left:213.9000000000001px;top:341.69999999999993px;width:14.6px;height:12.6px;border-radius:6.3px;background:#4e3b5e;color:#fff;font-size:7px;font-weight:700;text-align:center;line-height:12.6px">+1</div>
<svg class="abs" style="left:244.89999999999998px;top:341.79999999999995px" width="12.4" height="12.4" viewBox="0 0 13 13"><circle cx="6.5" cy="6.5" r="6.4" fill="#14b414"/><path d="M3.6 6.8L5.6 8.7L9.4 4.7" fill="none" stroke="#fff" stroke-width="1.6" stroke-linecap="round" stroke-linejoin="round"/></svg>
<svg class="abs" style="left:288.5px;top:340.79999999999995px" width="12" height="15" viewBox="0 0 12 15"><rect x="3.1" y="0.6" width="5.8" height="9.4" rx="2.9" fill="none" stroke="#9580a8" stroke-width="1.1"/><path d="M5.4 2.8L6 4.6L6.6 2.8Z" fill="#9580a8" stroke="#9580a8" stroke-width="0.5"/><path d="M0.9 5.4V6.8A5.1 5.1 0 0 0 11.1 6.8V5.4M6 11.9V14.2" fill="none" stroke="#9580a8" stroke-width="1.1"/></svg>
<div class="t" style="left:321.5px;top:344.79999999999995px;width:60px;text-align:center;font-size:9px;color:#333">13:00</div>
<div class="t" style="left:393px;top:344.79999999999995px;font-size:9px;font-weight:400;color:#333;">00:00:28</div>
<div class="t" style="left:458.5px;top:344.79999999999995px;font-size:9px;font-weight:400;color:#333;">Annual review</div>
<div class="abs" style="left:539.5px;top:346.29999999999995px;width:7px;height:7px;border-radius:50%;background:#f2c100"></div>
<div class="t" style="left:538.6px;top:344.79999999999995px;width:40px;text-align:right;font-size:9px;color:#333">0</div>
<div class="t" style="left:595.4px;top:344.79999999999995px;font-size:9.45px;font-weight:400;color:#666;">jackson@fintalkr.com</div>
</div>
<svg class="abs" style="left:0;top:0" width="1214" height="664"><path d="M748.2 151.2 L748.2 158.2 L749.9 156.6 L751.4 160.2 L752.9 159.5 L751.4 156.1 L753.6 155.9 Z" fill="#000" stroke="#fff" stroke-width="0.7"/></svg>
<div class="t" style="left:656px;top:558.8px;font-size:8.8px;color:#2a2a2a">No more content</div>
  <!--/PAGE-->
 </div>
</div>

<div id="overlay"></div>
<div id="bottom"></div>
<svg id="person" class="abs" style="left:0;top:0" width="1214" height="664" viewBox="0 0 1214 664">
 <defs>
  <linearGradient id="shirtG" gradientUnits="userSpaceOnUse" x1="0" y1="581" x2="0" y2="664"><stop offset="0" stop-color="#e8e6e4"/><stop offset="0.3" stop-color="#dcdad8"/><stop offset="0.7" stop-color="#b2b2b2"/><stop offset="1" stop-color="#8e8e90"/></linearGradient>
  <linearGradient id="shirtL" x1="0" y1="0" x2="1" y2="0"><stop offset="0" stop-color="#b8a890" stop-opacity=".45"/><stop offset="0.35" stop-color="#c8b8a0" stop-opacity=".15"/><stop offset="0.6" stop-color="#c8c8d0" stop-opacity="0"/><stop offset="1" stop-color="#9898a4" stop-opacity=".4"/></linearGradient>
  <radialGradient id="skinG" cx="0.5" cy="0.42" r="0.62"><stop offset="0" stop-color="#ebc0a2"/><stop offset="0.65" stop-color="#dcaa8a"/><stop offset="1" stop-color="#b8806a"/></radialGradient>
  <linearGradient id="beardG" x1="0" y1="0" x2="0" y2="1"><stop offset="0" stop-color="#8a6048" stop-opacity=".1"/><stop offset="0.4" stop-color="#7a5440" stop-opacity=".42"/><stop offset="1" stop-color="#5e3c2a" stop-opacity=".62"/></linearGradient>
  <linearGradient id="neckG" x1="0" y1="0" x2="0" y2="1"><stop offset="0" stop-color="#b8866a"/><stop offset="1" stop-color="#c89880"/></linearGradient>
 </defs>
 <path d="M971.4 664 C974 650 978 640 983 633 C988 624 996 614 1007 606.5 C1018 600 1030 597 1039.5 595 L1042 583 L1071.7 625 L1096 581 L1097 588 C1106 591 1114 594 1121 597 C1134 601 1144 605 1149 608 C1155 613 1158 618 1160 624 C1164 632 1167 640 1168 643 C1172 650 1174 656 1176 664 Z" fill="url(#shirtG)"/>
 <path d="M971.4 664 C974 650 978 640 983 633 C988 624 996 614 1007 606.5 C1018 600 1030 597 1039.5 595 L1042 583 L1071.7 625 L1096 581 L1097 588 C1106 591 1114 594 1121 597 C1134 601 1144 605 1149 608 C1155 613 1158 618 1160 624 C1164 632 1167 640 1168 643 C1172 650 1174 656 1176 664 Z" fill="url(#shirtL)"/>
 <path d="M1047 560 L1093 560 L1095 582 L1071.7 625 L1044 583 Z" fill="url(#neckG)"/>
 <path d="M1041 583 L1046 582 L1071.7 621 L1071.7 627 L1039 596 Z" fill="#dcdad8"/>
 <path d="M1096 580 L1100 582 L1099 592 L1073 627 L1071.7 622 Z" fill="#d8d6d4"/>
 <path d="M1072 626 L1072 664" stroke="#b8b8bc" stroke-width="1"/>
 <circle cx="1067" cy="636" r="1" fill="#b0b0b4"/>
 <ellipse cx="1039.5" cy="543" rx="4.5" ry="9.5" fill="#d49c7c"/>
 <ellipse cx="1100.5" cy="545" rx="4.5" ry="9.5" fill="#d09878"/>
 <path d="M1043 524 C1041 492 1101 490 1100 524 L1100 548 C1098 570 1088 585 1071 586 C1055 585 1045 570 1043 548 Z" fill="url(#skinG)"/>
 <path d="M1044 546 C1048 556 1056 558 1062 556 L1080 556 C1088 558 1095 556 1099 546 C1098 570 1088 585 1071 586 C1055 585 1045 570 1044 546 Z" fill="url(#beardG)"/>
 <path d="M1062 558 Q1071 554 1080 558 L1080 560 Q1071 557 1062 560 Z" fill="#6a4634" opacity=".6"/>
 <ellipse cx="1071" cy="562.5" rx="8" ry="3" fill="#c88a7c"/>
 <path d="M1052 527 Q1058 523.5 1065 526.5 M1077 526.5 Q1084 523.5 1091 527" fill="none" stroke="#4a3026" stroke-width="2" stroke-linecap="round"/>
 <ellipse cx="1058.5" cy="533.5" rx="3.6" ry="1.7" fill="#cdb4a4"/><circle cx="1058.5" cy="533.3" r="1.5" fill="#4e4640"/>
 <ellipse cx="1084" cy="533.5" rx="3.6" ry="1.7" fill="#cdb4a4"/><circle cx="1084" cy="533.3" r="1.5" fill="#4e4640"/>
 <path d="M1069 536 L1067 549 Q1071 552 1075 549" fill="none" stroke="#b88068" stroke-width="1.1" opacity=".8"/>
 <path d="M1036 532 C1032 506 1046 487 1071 486 C1097 485 1108 502 1104 534 L1099 532 C1099 518 1096 511 1088 508 C1076 503 1058 500 1051 506 C1047 510 1045 520 1043 532 Z" fill="#3b261a"/>
</svg>
<div class="abs" style="left:0;top:663px;width:1214px;height:1px;background:#000"></div>
</body></html>
